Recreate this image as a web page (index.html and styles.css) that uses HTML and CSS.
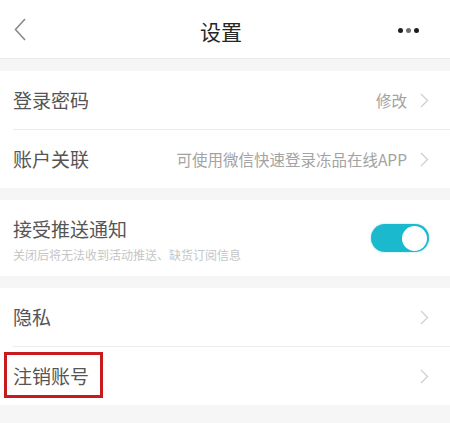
FILE: index.html
```html
<!DOCTYPE html>
<html lang="zh">
<head>
<meta charset="utf-8">
<link rel="stylesheet" href="styles.css">
</head>
<body>
<div class="header">
  <svg class="back" width="12" height="23" viewBox="0 0 12 23"><path d="M11 1 L1.5 11.5 L11 22" fill="none" stroke="#8a8a8a" stroke-width="1.6"/></svg>
  <div class="title">设置</div>
  <div class="more"><span></span><span class="mid"></span><span></span></div>
</div>

<div class="group">
  <div class="row">
    <div class="label">登录密码</div>
    <div class="right"><span class="value">修改</span><svg class="chev" width="9" height="15" viewBox="0 0 9 15"><path d="M1 1 L7.5 7.5 L1 14" fill="none" stroke="#cfcfcf" stroke-width="1.3"/></svg></div>
  </div>
  <div class="row sep">
    <div class="label">账户关联</div>
    <div class="right"><span class="value">可使用微信快速登录冻品在线APP</span><svg class="chev" width="9" height="15" viewBox="0 0 9 15"><path d="M1 1 L7.5 7.5 L1 14" fill="none" stroke="#cfcfcf" stroke-width="1.3"/></svg></div>
  </div>
</div>

<div class="group">
  <div class="row push">
    <div class="texts">
      <div class="label">接受推送通知</div>
      <div class="sub">关闭后将无法收到活动推送、缺货订阅信息</div>
    </div>
    <div class="toggle"><div class="knob"></div></div>
  </div>
</div>

<div class="group">
  <div class="row">
    <div class="label">隐私</div>
    <div class="right"><svg class="chev" width="9" height="15" viewBox="0 0 9 15"><path d="M1 1 L7.5 7.5 L1 14" fill="none" stroke="#cfcfcf" stroke-width="1.3"/></svg></div>
  </div>
  <div class="row sep mark">
    <div class="label">注销账号</div>
    <div class="right"><svg class="chev" width="9" height="15" viewBox="0 0 9 15"><path d="M1 1 L7.5 7.5 L1 14" fill="none" stroke="#cfcfcf" stroke-width="1.3"/></svg></div>
    <div class="redbox"></div>
  </div>
</div>
</body>
</html>
```

FILE: styles.css
```css
* { box-sizing: border-box; }
html, body { margin: 0; padding: 0; }
body {
  width: 450px;
  height: 423px;
  overflow: hidden;
  background: #f6f6f6;
  font-family: "Noto Sans CJK SC", "Noto Sans", sans-serif;
}
.header {
  height: 59px;
  background: #fff;
  border-bottom: 1px solid #e9e9e9;
  display: flex;
  align-items: center;
  justify-content: space-between;
  padding: 2px 31px 0 14px;
  position: relative;
}
.back { display: block; margin-top: -2px; }
.title {
  position: absolute;
  left: 0; right: 8px;
  text-align: center;
  font-size: 21px;
  color: #262626;
  line-height: 59px;
  top: 2px;
  pointer-events: none;
}
.more { display: flex; gap: 3px; align-items: center; }
.more span {
  width: 5px; height: 5px; border-radius: 50%;
  background: #1e1e1e;
}
.more span.mid { background: #6e6e6e; }
.group {
  background: #fff;
  margin-top: 12px;
}
.group:first-of-type { margin-top: 13px; }
.row {
  height: 58px;
  display: flex;
  align-items: center;
  justify-content: space-between;
  padding: 0 21px 0 13px;
  position: relative;
}
.row.sep::before {
  content: "";
  position: absolute;
  left: 13px; right: 0; top: -1px;
  border-top: 1px solid #ececec;
}
.row.sep { margin-top: 1px; }
.label {
  font-size: 19px;
  color: #555;
  line-height: 24px;
}
.right { display: flex; align-items: center; gap: 13px; }
.value { font-size: 15.5px; color: #a3a3a3; }
.chev { display: block; }
.row.push {
  height: 76px;
  align-items: center;
}
.texts { display: flex; flex-direction: column; gap: 6px; padding-top: 3px; }
.sub { font-size: 12px; color: #c6c6c6; line-height: 16px; }
.toggle {
  width: 58px; height: 28px;
  border-radius: 14px;
  background: #1ab9cd;
  display: flex;
  justify-content: flex-end;
  align-items: center;
  padding: 0 2px;
  box-shadow: 0 0 2px rgba(26,185,205,0.5);
}
.knob {
  width: 25px; height: 25px;
  border-radius: 50%;
  background: #fff;
}
.redbox {
  position: absolute;
  left: 4px;
  top: 5px;
  width: 99px;
  height: 46px;
  border: 3px solid #c71b20;
}
```
